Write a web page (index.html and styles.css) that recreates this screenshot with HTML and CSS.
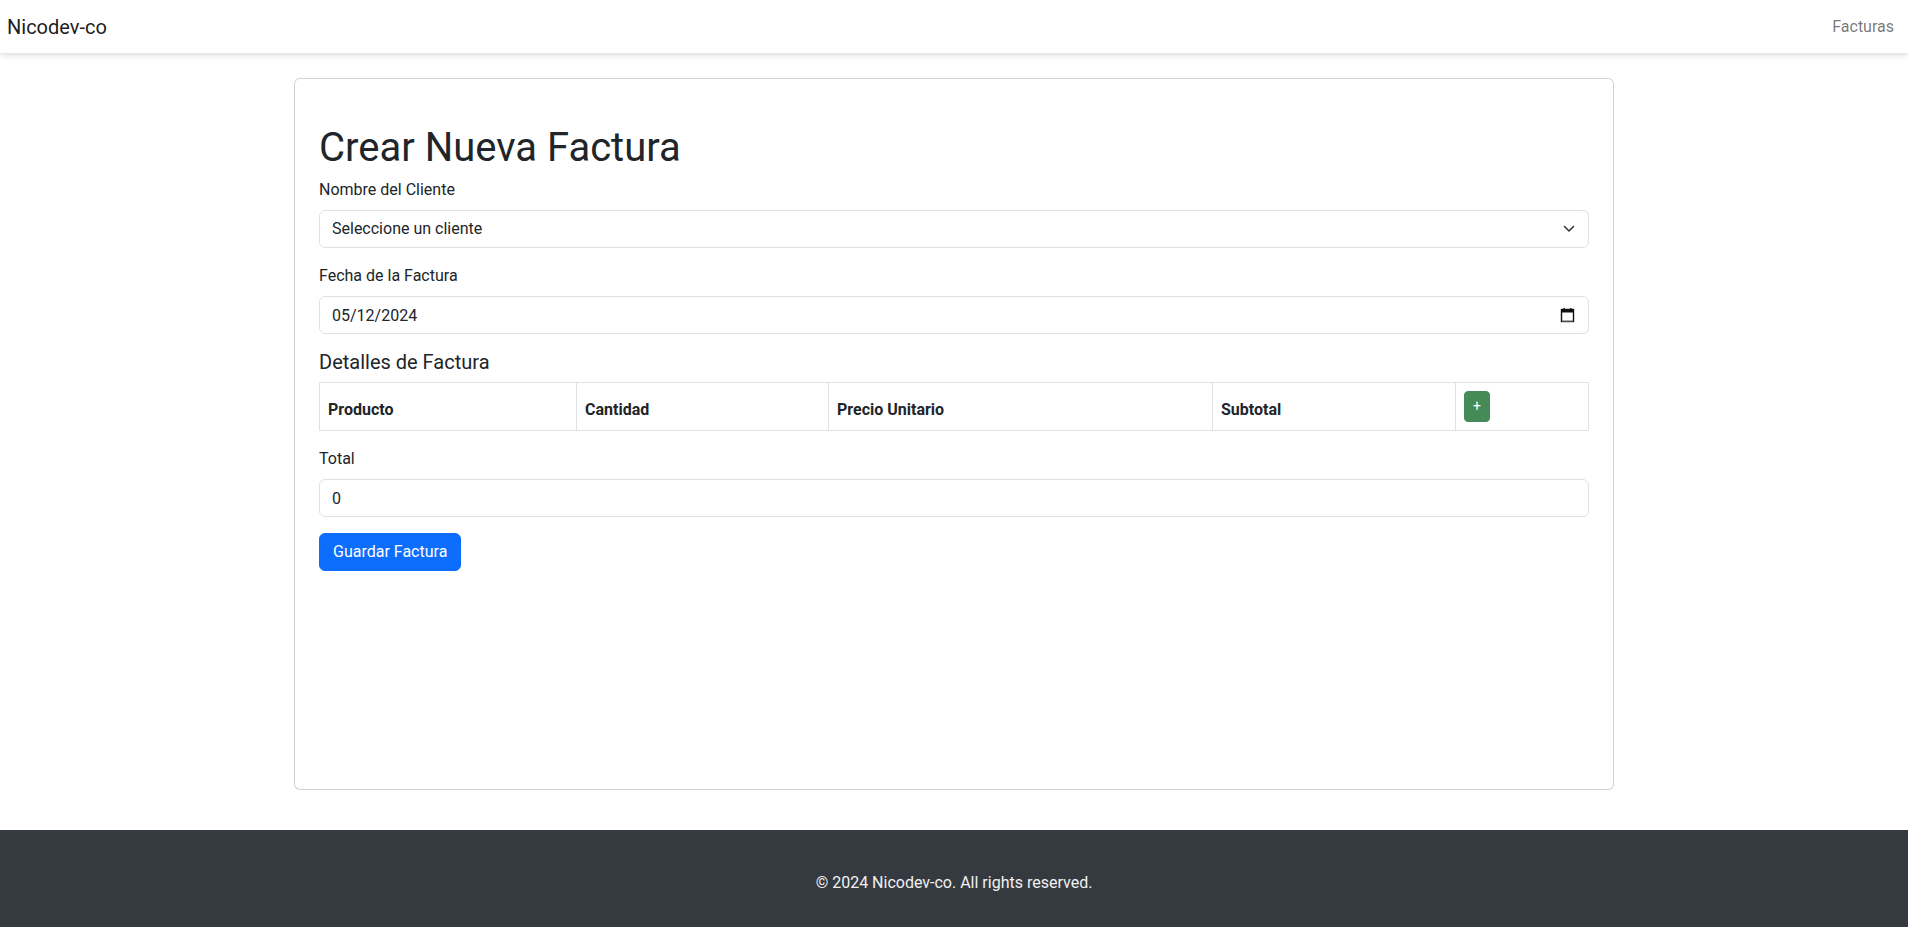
FILE: index.html
```html
<!DOCTYPE html>
<html lang="es">
<head>
<meta charset="utf-8">
<title>Crear Nueva Factura</title>
<link rel="stylesheet" href="styles.css">
</head>
<body>
<nav class="navbar">
  <a class="brand" href="#">Nicodev-co</a>
  <a class="nav-link" href="#">Facturas</a>
</nav>

<main class="container">
  <section class="card">
    <div class="card-body">
      <h1 class="title">Crear Nueva Factura</h1>
      <form class="form">
        <div class="group">
          <label class="label" for="cliente">Nombre del Cliente</label>
          <div class="field-wrap">
            <select id="cliente" class="control select">
              <option>Seleccione un cliente</option>
            </select>
            <svg class="chevron" width="12" height="8" viewBox="0 0 12 8"><path d="M1.5 1.5L6 6l4.5-4.5" fill="none" stroke="#343a40" stroke-width="1.6" stroke-linecap="round" stroke-linejoin="round"/></svg>
          </div>
        </div>
        <div class="group">
          <label class="label" for="fecha">Fecha de la Factura</label>
          <div class="field-wrap">
            <input id="fecha" class="control" type="text" value="05/12/2024">
            <svg class="calendar" width="15" height="16" viewBox="0 0 15 16"><rect x="1.5" y="2.5" width="12" height="12" fill="none" stroke="#111" stroke-width="1.4"/><rect x="1.5" y="2.5" width="12" height="3" fill="#111"/><rect x="3.5" y="1" width="1.4" height="2.5" fill="#111"/><rect x="10.1" y="1" width="1.4" height="2.5" fill="#111"/><rect x="2" y="13.6" width="11" height="1" fill="#777"/></svg>
          </div>
        </div>
        <h5 class="subtitle">Detalles de Factura</h5>
        <table class="table">
          <colgroup>
            <col class="c1"><col class="c2"><col class="c3"><col class="c4"><col class="c5">
          </colgroup>
          <thead>
            <tr>
              <th>Producto</th>
              <th>Cantidad</th>
              <th>Precio Unitario</th>
              <th>Subtotal</th>
              <th><button type="button" class="btn-add">+</button></th>
            </tr>
          </thead>
        </table>
        <div class="group">
          <label class="label" for="total">Total</label>
          <input id="total" class="control" type="text" value="0" readonly>
        </div>
        <button type="submit" class="btn-primary">Guardar Factura</button>
      </form>
    </div>
  </section>
</main>

<footer class="footer">
  <p class="footer-text">© 2024 Nicodev-co. All rights reserved.</p>
</footer>
</body>
</html>
```

FILE: styles.css
```css
* { box-sizing: border-box; }

html, body {
  margin: 0;
  padding: 0;
}

body {
  font-family: Roboto, "Liberation Sans", sans-serif;
  font-size: 16px;
  line-height: 1.5;
  color: #212529;
  background: #fff;
}

.navbar {
  height: 53px;
  display: flex;
  align-items: center;
  justify-content: space-between;
  padding: 0 6px 0 7px;
  background: #fff;
  box-shadow: 0 2px 6px rgba(0, 0, 0, 0.15);
  position: relative;
  z-index: 1;
}

.brand {
  font-size: 20px;
  line-height: 30px;
  color: rgba(0, 0, 0, 0.9);
  text-decoration: none;
}

.nav-link {
  font-size: 16px;
  color: rgba(0, 0, 0, 0.55);
  text-decoration: none;
  padding: 0 8px;
}

.container {
  width: 1320px;
  margin: 25px auto 40px;
}

.card {
  border: 1px solid rgba(0, 0, 0, 0.175);
  border-radius: 6px;
  min-height: 712px;
  background: #fff;
}

.card-body {
  padding: 45px 24px 24px;
}

.title {
  margin: 0 0 6px;
  font-size: 40px;
  font-weight: 400;
  line-height: 1.2;
}

.form {
  display: flex;
  flex-direction: column;
}

.group {
  margin-bottom: 16px;
}

.label {
  display: block;
  margin-bottom: 8px;
}

.control {
  display: block;
  width: 100%;
  height: 38px;
  padding: 6px 12px;
  font-family: inherit;
  font-size: 16px;
  line-height: 1.5;
  color: #212529;
  background: #fff;
  border: 1px solid #dee2e6;
  border-radius: 6px;
  outline: none;
}

.field-wrap {
  position: relative;
}

.select {
  appearance: none;
  -webkit-appearance: none;
  padding-right: 36px;
}

.chevron {
  position: absolute;
  right: 14px;
  top: 15px;
  pointer-events: none;
}

.calendar {
  position: absolute;
  right: 14px;
  top: 11px;
  pointer-events: none;
}

.subtitle {
  margin: 0 0 8px;
  font-size: 20px;
  font-weight: 400;
  line-height: 1.2;
}

.table {
  width: 100%;
  border-collapse: collapse;
  margin-bottom: 16px;
  table-layout: fixed;
}

.c1 { width: 257px; }
.c2 { width: 252px; }
.c3 { width: 384px; }
.c4 { width: 243px; }
.c5 { width: 133px; }

.table th {
  border: 1px solid #dee2e6;
  padding: 8px;
  text-align: left;
  vertical-align: bottom;
  font-weight: 700;
}

.btn-add {
  display: block;
  height: 31px;
  padding: 4px 8px;
  font-family: inherit;
  font-size: 14px;
  line-height: 21px;
  color: #fff;
  background: #458b57;
  border: 1px solid #458b57;
  border-radius: 4px;
}

.btn-primary {
  align-self: flex-start;
  height: 38px;
  padding: 6px 13px;
  font-family: inherit;
  font-size: 16px;
  line-height: 1.5;
  color: #fff;
  background: #0d6efd;
  border: 1px solid #0d6efd;
  border-radius: 6px;
}

.footer {
  background: #343a40;
  padding: 41px 0 32px;
  text-align: center;
}

.footer-text {
  margin: 0;
  color: #f1f1f1;
  line-height: 24px;
}
```
